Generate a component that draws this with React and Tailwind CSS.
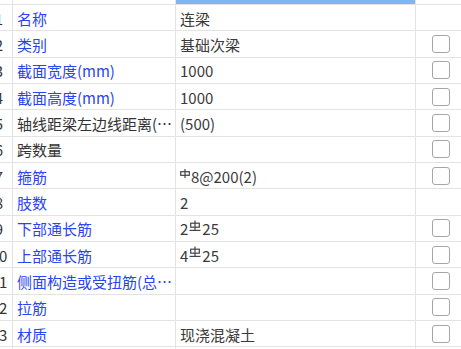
import React from 'react';

const rows = [
  { n: 1, label: '名称', value: '连梁', check: false },
  { n: 2, label: '类别', value: '基础次梁' },
  { n: 3, label: '截面宽度(mm)', value: '1000' },
  { n: 4, label: '截面高度(mm)', value: '1000' },
  { n: 5, label: '轴线距梁左边线距离(mm)', value: '(500)', dark: true },
  { n: 6, label: '跨数量', value: '', dark: true },
  { n: 7, label: '箍筋', value: ['hpb', '8@200(2)'] },
  { n: 8, label: '肢数', value: '2', check: false },
  { n: 9, label: '下部通长筋', value: ['2', 'hrb', '25'] },
  { n: 10, label: '上部通长筋', value: ['4', 'hrb', '25'] },
  { n: 11, label: '侧面构造或受扭筋(总配筋值)', value: '' },
  { n: 12, label: '拉筋', value: '' },
  { n: 13, label: '材质', value: '现浇混凝土' },
  { n: 14, label: '', value: '', check: false },
];

// rebar grade marks (HPB300 / HRB400)
function Hpb() {
  return (
    <svg width="10" height="9" viewBox="0 0 10 9" className="inline-block -mt-[6px] mr-[1px]">
      <rect x="0.7" y="2.7" width="8.6" height="3.6" fill="none" stroke="#444" strokeWidth="1.2" />
      <line x1="5" y1="0" x2="5" y2="9" stroke="#444" strokeWidth="1.2" />
    </svg>
  );
}

function Hrb() {
  return (
    <svg width="12" height="12" viewBox="0 0 12 12" className="inline-block -mt-[7px] mx-[1px]">
      <rect x="1.7" y="3.2" width="8.6" height="4" fill="none" stroke="#444" strokeWidth="1.2" />
      <line x1="6" y1="0.5" x2="6" y2="10" stroke="#444" strokeWidth="1.2" />
      <line x1="0.5" y1="10.4" x2="11.5" y2="10.4" stroke="#444" strokeWidth="1.2" />
    </svg>
  );
}

function Value({ v }) {
  if (!Array.isArray(v)) return v;
  return v.map((p, i) =>
    p === 'hpb' ? <Hpb key={i} /> : p === 'hrb' ? <Hrb key={i} /> : <span key={i}>{p}</span>
  );
}

export default function App() {
  return (
    <div
      className="w-[461px] h-[349px] overflow-hidden bg-white text-[15px]"
      style={{ fontFamily: '"Noto Sans CJK SC", "Noto Sans", sans-serif' }}
    >
      <div className="flex h-[5px] border-b border-[#e3e3e3]">
        <div className="w-[13px] shrink-0 border-r border-[#e3e3e3]" />
        <div className="w-[163px] shrink-0 border-r border-[#e3e3e3]" />
        <div className="w-[240px] shrink-0 bg-[#7db6f3] border-r border-[#e3e3e3]" />
        <div className="flex-1" />
      </div>
      {rows.map((r) => (
        <div key={r.n} className="flex h-[26.33px] border-b border-[#e3e3e3]">
          <div className="w-[13px] shrink-0 border-r border-[#e3e3e3] overflow-hidden flex items-center pt-[2px] text-[#333]">
            <span className="w-[26px] shrink-0 -ml-[14px] text-center leading-[20px]">{r.n}</span>
          </div>
          <div
            className={`w-[163px] shrink-0 border-r border-[#e3e3e3] flex items-center pl-[4px] pt-[2px] overflow-hidden ${
              r.dark ? 'text-[#333]' : 'text-[#2a44f2]'
            }`}
          >
            <span className="truncate leading-[20px]">{r.label}</span>
          </div>
          <div className="w-[240px] shrink-0 border-r border-[#e3e3e3] flex items-center pl-[4px] pt-[2px] text-[#3a3a3a] whitespace-nowrap leading-[20px]">
            <Value v={r.value} />
          </div>
          <div className="flex-1 flex items-center pl-[16px]">
            {r.check !== false && (
              <div className="w-[18px] h-[18px] rounded-[3px] border-[1.5px] border-[#a6a6a6] bg-white" />
            )}
          </div>
        </div>
      ))}
    </div>
  );
}
